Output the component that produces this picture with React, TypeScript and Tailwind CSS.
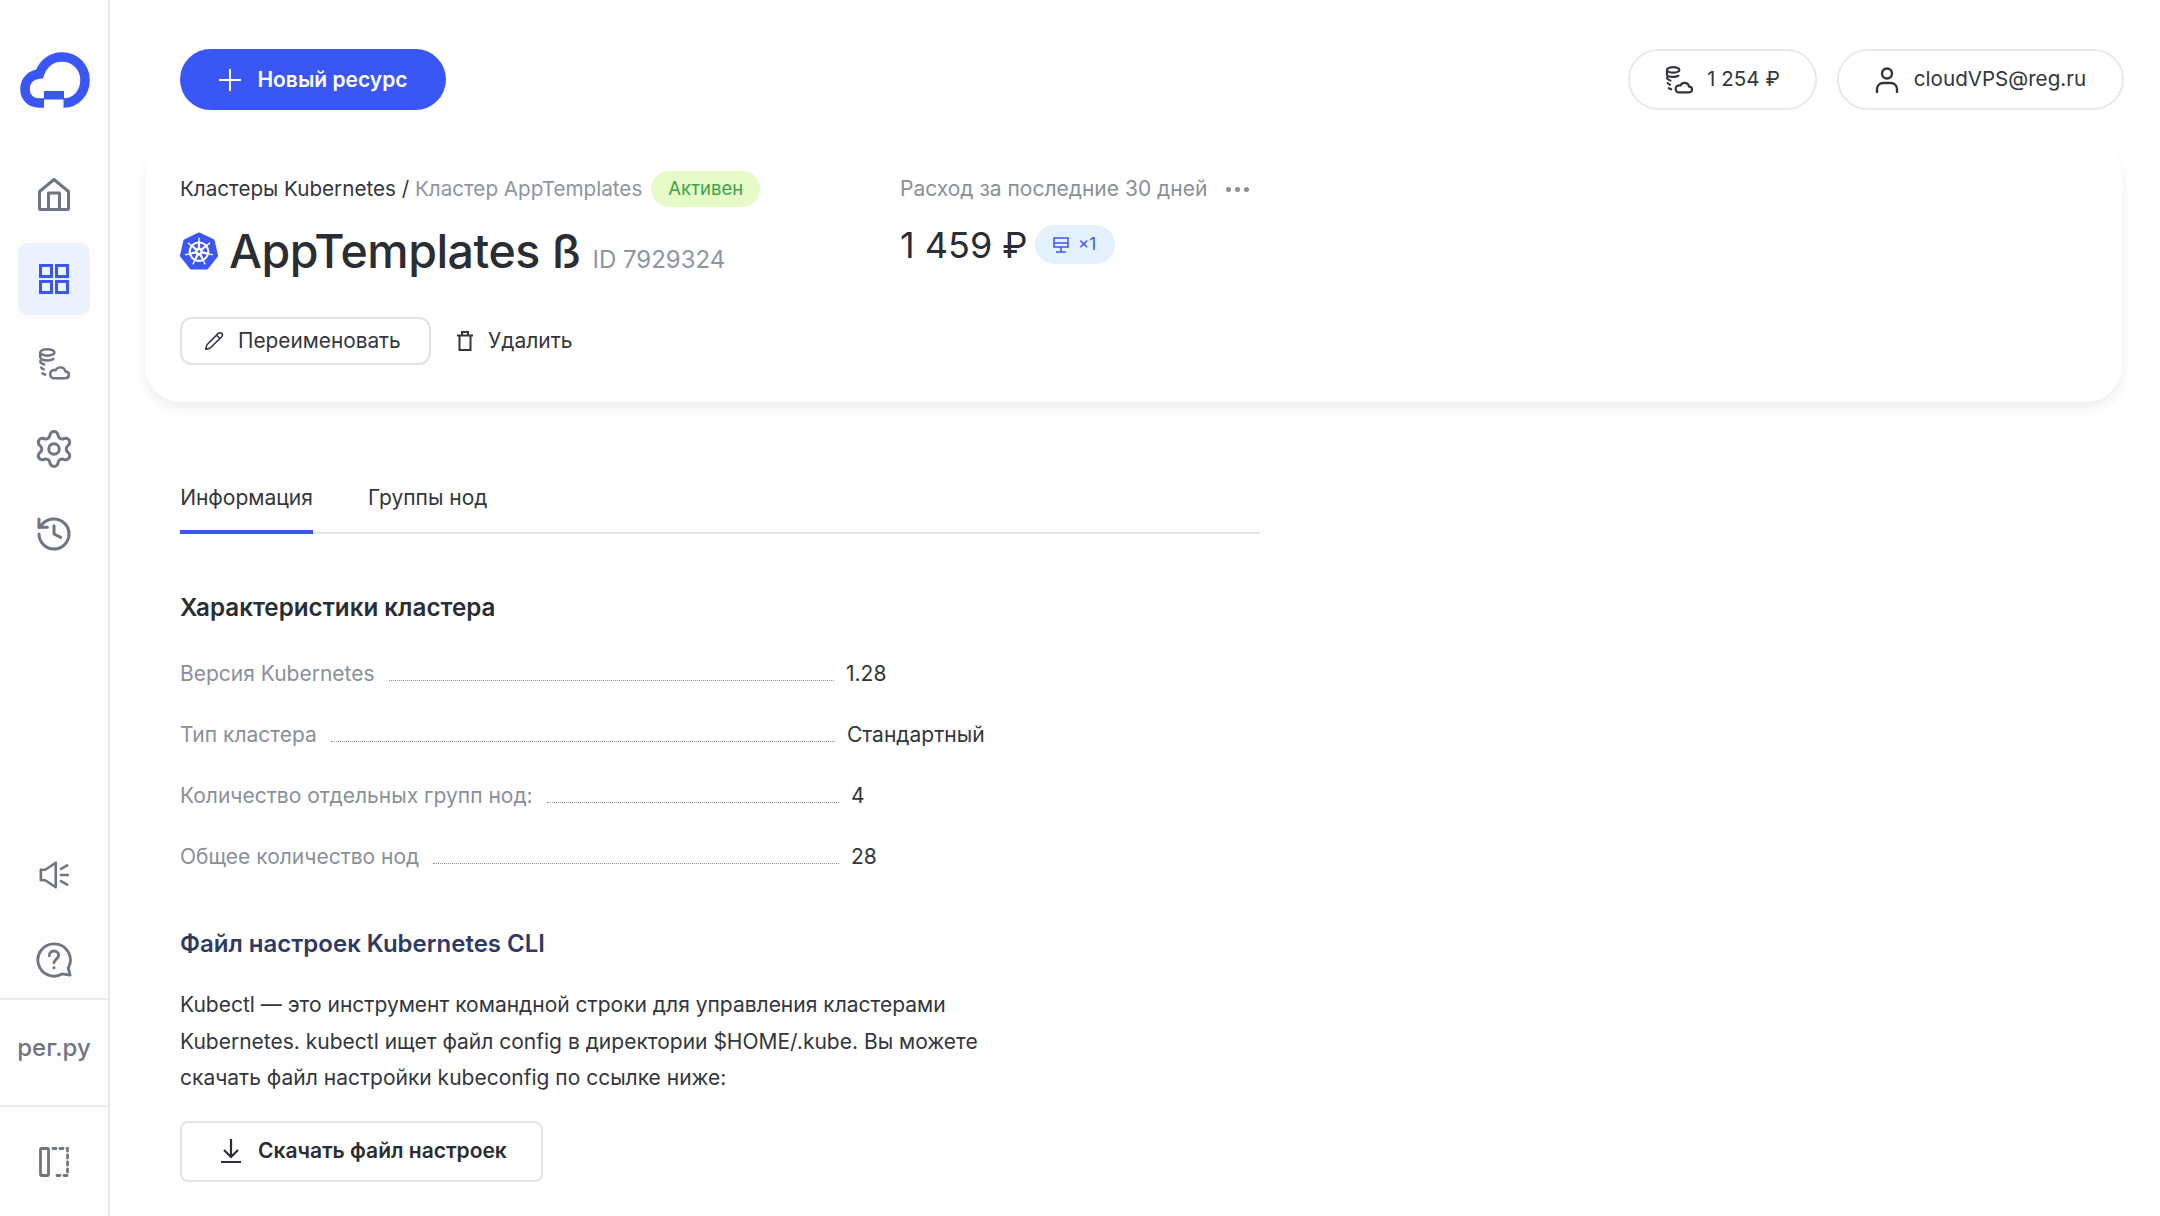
import { History, Pencil, Settings } from 'lucide-react';
import { SiKubernetes } from 'react-icons/si';

function CoinsCloud({ className }: { className?: string }) {
  return (
    <svg viewBox="0 0 36 36" fill="none" stroke="currentColor" strokeWidth="2.800" strokeLinecap="round" strokeLinejoin="round" className={className}>
      <ellipse cx="10.500" cy="5" rx="8" ry="3.600" />
      <path d="M2.500 6v4.500c0 2 3.600 3.500 8 3.500 2.800 0 5.300-.6 6.800-1.700M2.500 15c.3 1.700 2 3 4.500 3.600M3.500 22c.7 1 1.600 1.500 3 2M5 28.500l3 1.500" />
      <path d="M17 34h13.500c2.500 0 4.300-1.600 4.300-3.800s-1.700-3.700-3.900-3.700c-.7-2.900-3-4.700-5.700-4.700-2.400 0-4.300 1.200-5.300 3.200-.5-.2-1-.2-1.500-.2-2.800 0-4.700 1.900-4.700 4.400S15.600 34 17 34Z" />
    </svg>
  );
}

function Logo() {
  return (
    <svg viewBox="0 0 70 56" className="h-[56px] w-[70px]" fill="none">
      <path d="M24 51H19C10.500 51 5 45 5 37c0-8.500 6-14.500 14.500-15C23 12 31 5 42 5c13 0 23 10 23 23 0 13-9 23-21 23h-.5" stroke="#3a56f5" strokeWidth="9.500" />
      <rect x="24" y="39" width="20" height="8.500" fill="#3a56f5" />
    </svg>
  );
}

function NavItem({ children, active }: { children: React.ReactNode; active?: boolean }) {
  return (
    <div className={`mx-[18px] mb-[13px] flex h-[72px] w-[72px] items-center justify-center rounded-[10px] ${active ? 'bg-[#ebf1fd] text-[#3a56f5]' : 'text-[#6f7582]'}`}>
      {children}
    </div>
  );
}

function Sidebar() {
  return (
    <aside className="flex h-full w-[110px] shrink-0 flex-col border-r-2 border-[#e9e9ec] bg-[#fdfdfd]">
      <div className="mb-[50px] ml-[20px] mt-[52px]">
        <Logo />
      </div>
      <NavItem>
        <svg viewBox="0 0 32 33" fill="none" stroke="currentColor" strokeWidth="3" strokeLinejoin="round" className="h-[33px] w-[32px]">
          <path d="M1.500 13.500 16 1.500l14.500 12v17a1 1 0 0 1-1 1h-27a1 1 0 0 1-1-1Z" />
          <path d="M10.500 31.500V15h11v16.500" />
        </svg>
      </NavItem>
      <NavItem active>
        <svg viewBox="0 0 30 30" fill="none" stroke="currentColor" strokeWidth="3" className="h-[30px] w-[30px]">
          <rect x="1.500" y="1.500" width="11" height="11" />
          <rect x="17.500" y="1.500" width="11" height="11" />
          <rect x="1.500" y="17.500" width="11" height="11" />
          <rect x="17.500" y="17.500" width="11" height="11" />
        </svg>
      </NavItem>
      <NavItem>
        <CoinsCloud className="h-[32px] w-[32px]" />
      </NavItem>
      <NavItem>
        <Settings className="h-[42px] w-[42px]" strokeWidth={1.700} />
      </NavItem>
      <NavItem>
        <History className="h-[40px] w-[40px]" strokeWidth={1.800} />
      </NavItem>

      <div className="mt-auto flex flex-col">
        <div className="flex h-[94px] items-center justify-center text-[#6f7582]">
          <svg viewBox="0 0 34 32" fill="none" stroke="currentColor" strokeWidth="3" strokeLinecap="round" strokeLinejoin="round" className="h-[28px] w-[30px]">
            <path d="M2 10h5L19 2v28L7 22H2Z" />
            <path d="M25 9l7-4M25 16h8M25 23l7 4" />
          </svg>
        </div>
        <div className="flex h-[76px] items-center justify-center text-[#6f7582]">
          <svg viewBox="0 0 38 38" fill="none" stroke="currentColor" strokeWidth="3" strokeLinecap="round" strokeLinejoin="round" className="h-[36px] w-[36px]">
            <path d="M19 2a17 17 0 1 0 8.500 31.700L36 35l-2-7.500A17 17 0 0 0 19 2Z" />
            <path d="M14 14.500c0-3 2.300-5 5-5s5 2 5 4.500c0 4-5 4.200-5 8" />
            <path d="M19 27v.5" />
          </svg>
        </div>
        <div className="flex h-[107px] items-center justify-center border-t-2 border-[#e9e9ec] pb-[9px] text-[24px] font-medium text-[#6f7582]">
          рег.ру
        </div>
        <div className="flex h-[111px] items-center justify-center border-t-2 border-[#e9e9ec] text-[#6f7582]">
          <svg viewBox="0 0 30 30" fill="none" stroke="currentColor" strokeWidth="2.800" strokeLinejoin="round" className="h-[30px] w-[30px]">
            <rect x="1.500" y="1.500" width="8" height="27" rx="1" />
            <path d="M14 1.500h14.500v27H14" strokeDasharray="3 4" strokeLinecap="round" />
          </svg>
        </div>
      </div>
    </aside>
  );
}

function Header() {
  return (
    <header className="flex items-center justify-between pl-[70px] pr-[36px] pt-[49px]">
      <button className="flex h-[61px] w-[266px] items-center justify-center gap-[15px] rounded-full bg-[#3a56f5] text-[21px] font-semibold text-white">
        <svg viewBox="0 0 24 24" fill="none" stroke="currentColor" strokeWidth="2" className="h-[24px] w-[24px]">
          <path d="M12 1v22M1 12h22" />
        </svg>
        Новый ресурс
      </button>
      <div className="flex gap-[20px] text-[20.600px] text-[#33363d]">
        <div className="flex h-[61px] w-[189px] items-center justify-center gap-[14px] rounded-full border-2 border-[#e9e9ec]">
          <CoinsCloud className="h-[28px] w-[28px]" />
          1 254 ₽
        </div>
        <div className="flex h-[61px] w-[287px] items-center justify-center gap-[15px] rounded-full border-2 border-[#e9e9ec]">
          <svg viewBox="0 0 24 26" fill="none" stroke="currentColor" strokeWidth="2.400" strokeLinecap="round" className="h-[26px] w-[24px]">
            <circle cx="12" cy="6.500" r="5" />
            <path d="M2 25v-3a6 6 0 0 1 6-6h8a6 6 0 0 1 6 6v3" />
          </svg>
          cloudVPS@reg.ru
        </div>
      </div>
    </header>
  );
}

function SummaryCard() {
  return (
    <section className="ml-[35px] mr-[38px] mt-[30px] flex h-[262px] rounded-[36px] bg-white pl-[35px] pt-[31px] shadow-[0_6px_12px_rgba(30,40,70,0.08)]">
      <div className="w-[720px] shrink-0">
        <div className="flex h-[36px] items-center text-[20.650px] text-[#33363d]">
          Кластеры Kubernetes /&nbsp;<span className="text-[#8f95a3]">Кластер AppTemplates</span>
          <span className="ml-[9px] flex h-[36px] w-[109px] items-center justify-center rounded-full bg-[#e6fbc8] text-[18.500px] text-[#3fa24b]">Активен</span>
        </div>
        <div className="mt-[14px] flex h-[60px] items-center">
          <SiKubernetes className="h-[38px] w-[38px] text-[#3a56f5]" />
          <h1 className="ml-[11px] text-[46.500px] font-medium leading-none tracking-[-0.5px] text-[#2a2d33]">AppTemplates ß</h1>
          <span className="ml-[12px] mt-[17px] text-[24px] text-[#8f95a3]">ID 7929324</span>
        </div>
        <div className="mt-[36px] flex items-center">
          <button className="flex h-[48px] w-[251px] items-center gap-[14px] rounded-[12px] border-2 border-[#e1e2e6] pl-[22px] text-[20.800px] text-[#33363d]">
            <Pencil className="h-[20px] w-[20px]" strokeWidth={1.800} />
            Переименовать
          </button>
          <button className="ml-[26px] flex items-center gap-[15px] text-[21px] text-[#33363d]">
            <svg viewBox="0 0 16 20" fill="none" stroke="currentColor" strokeWidth="2" className="h-[20px] w-[16px]">
              <path d="M0 4.500h16M5 4V1h6v3M2.500 4.500V19h11V4.500" />
            </svg>
            Удалить
          </button>
        </div>
      </div>
      <div>
        <div className="flex h-[36px] items-center gap-[19px] text-[21px] text-[#8a8f9b]">
          Расход за последние 30 дней
          <span className="flex gap-[4px]">
            <i className="h-[5px] w-[5px] rounded-full bg-[#8a8f9b]" />
            <i className="h-[5px] w-[5px] rounded-full bg-[#8a8f9b]" />
            <i className="h-[5px] w-[5px] rounded-full bg-[#8a8f9b]" />
          </span>
        </div>
        <div className="mt-[17px] flex h-[41px] items-center gap-[7px]">
          <span className="text-[36px] leading-none text-[#2a2d33]">1 459 ₽</span>
          <span className="flex h-[39px] w-[80px] items-center justify-center gap-[9px] rounded-full bg-[#e4f1fd] text-[17px] text-[#3a56f5]">
            <svg viewBox="0 0 16 16" fill="none" stroke="currentColor" strokeWidth="1.500" className="h-[16px] w-[16px]">
              <path d="M1 1h14v5H1ZM1 6v4h14V6M8 10v5M3 15h10" />
            </svg>
            ×1
          </span>
        </div>
      </div>
    </section>
  );
}

const specs = [
  { label: 'Версия Kubernetes', value: '1.28', width: 'w-[654px]' },
  { label: 'Тип кластера', value: 'Стандартный', width: 'w-[655px]' },
  { label: 'Количество отдельных групп нод:', value: '4', width: 'w-[659px]' },
  { label: 'Общее количество нод', value: '28', width: 'w-[659px]' },
];

export default function App() {
  return (
    <div className="flex h-[1216px] overflow-hidden bg-white font-['Inter',sans-serif]">
      <Sidebar />
      <main className="min-w-0 flex-1">
        <Header />
        <SummaryCard />

        <div className="pl-[70px]">
          <nav className="mt-[68px] flex h-[64px] w-[1080px] gap-[55px] border-b-2 border-[#e4e5e9] text-[21px] text-[#33363d]">
            <div className="-mb-[2px] flex h-[64px] w-[133px] items-start justify-center border-b-4 border-[#3a56f5] pt-[12px]">Информация</div>
            <div className="pt-[12px]">Группы нод</div>
          </nav>

          <h2 className="mt-[56px] text-[24.200px] font-semibold leading-[36px] text-[#2a2d33]">Характеристики кластера</h2>
          <div className="mt-[30px] flex flex-col gap-[25px] text-[21px] leading-[36px]">
            {specs.map(row => (
              <div key={row.label} className="flex">
                <div className={`flex ${row.width} items-center gap-[14px] text-[#8a8f9b]`}>
                  <span>{row.label}</span>
                  <span className="mt-[12px] min-w-0 flex-1 border-b border-dotted border-[#8a8f9b]" />
                </div>
                <span className="ml-[12px] text-[#33363d]">{row.value}</span>
              </div>
            ))}
          </div>

          <h2 className="mt-[51px] text-[24px] font-semibold leading-[36px] text-[#2f3a63]">Файл настроек Kubernetes CLI</h2>
          <p className="mt-[25px] w-[840px] text-[21px] leading-[36.500px] text-[#33363d]">
            Kubectl — это инструмент командной строки для управления кластерами
            <br />
            Kubernetes. kubectl ищет файл config в директории $HOME/.kube. Вы можете
            <br />
            скачать файл настройки kubeconfig по ссылке ниже:
          </p>
          <button className="mt-[24px] flex h-[61px] w-[363px] items-center gap-[16px] rounded-[8px] border-2 border-[#e4e5e9] pl-[38px] text-[21px] font-semibold text-[#2a2d33]">
            <svg viewBox="0 0 22 24" fill="none" stroke="currentColor" strokeWidth="2.200" className="h-[24px] w-[22px]">
              <path d="M11 0v17M4 11l7 7 7-7M1 23h20" />
            </svg>
            Скачать файл настроек
          </button>
        </div>
      </main>
    </div>
  );
}
